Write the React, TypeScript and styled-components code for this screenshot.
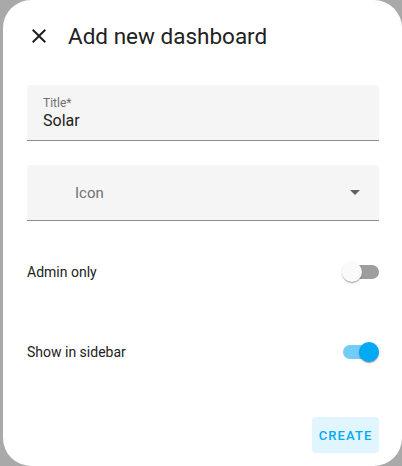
import React from 'react';
import styled, { createGlobalStyle } from 'styled-components';

const GlobalStyle = createGlobalStyle`
  html, body {
    margin: 0;
    padding: 0;
    background: #a9a9a9;
    font-family: Roboto, 'Liberation Sans', sans-serif;
  }
  * {
    box-sizing: border-box;
  }
`;

const Dialog = styled.div`
  margin-left: 3px;
  width: 399px;
  height: 466px;
  background: #fff;
  border-radius: 28px;
  padding: 0 23px 0 24px;
  display: flex;
  flex-direction: column;
`;

const Header = styled.div`
  display: flex;
  align-items: center;
  height: 72px;
  gap: 17px;
`;

const CloseButton = styled.button`
  width: 24px;
  height: 24px;
  padding: 0;
  border: none;
  background: none;
  color: #212121;
  display: flex;
  align-items: center;
  justify-content: center;
`;

const Title = styled.h2`
  margin: 0;
  font-size: 22.5px;
  font-weight: 400;
  color: #212121;
`;

const Field = styled.div<{ $top: number }>`
  margin-top: ${(p) => p.$top}px;
  height: 56px;
  background: #f5f5f5;
  border-radius: 4px 4px 0 0;
  border-bottom: 1px solid #8c8c8c;
  position: relative;
  display: flex;
  flex-direction: column;
  justify-content: center;
  padding: 0 16px;
`;

const SmallLabel = styled.span`
  font-size: 12px;
  color: #6f6f6f;
  line-height: 14px;
  margin-top: 2px;
`;

const Value = styled.span`
  font-size: 16px;
  color: #212121;
  line-height: 22px;
`;

const SelectField = styled(Field)`
  flex-direction: row;
  align-items: center;
  justify-content: space-between;
  padding: 0 19px 0 48px;
`;

const Placeholder = styled.span`
  font-size: 15px;
  color: #717171;
  margin-top: 1px;
`;

const Row = styled.div<{ $top: number }>`
  margin-top: ${(p) => p.$top}px;
  height: 48px;
  display: flex;
  align-items: center;
  justify-content: space-between;
`;

const RowLabel = styled.span`
  font-size: 14px;
  color: #212121;
`;

const Switch = styled.div<{ $on: boolean }>`
  position: relative;
  width: 36px;
  height: 14px;
  border-radius: 7px;
  background: ${(p) => (p.$on ? '#72ccf6' : '#9e9e9e')};
`;

const Thumb = styled.div<{ $on: boolean }>`
  position: absolute;
  top: -3px;
  left: ${(p) => (p.$on ? '16px' : '-1px')};
  width: 20px;
  height: 20px;
  border-radius: 50%;
  background: ${(p) => (p.$on ? '#03a9f4' : '#fafafa')};
  box-shadow: 0 2px 1px -1px rgba(0, 0, 0, 0.2), 0 1px 1px 0 rgba(0, 0, 0, 0.14),
    0 1px 3px 0 rgba(0, 0, 0, 0.12);
`;

const Footer = styled.div`
  margin-top: auto;
  margin-bottom: 13px;
  display: flex;
  justify-content: flex-end;
`;

const CreateButton = styled.button`
  width: 67px;
  height: 36px;
  border: none;
  border-radius: 4px;
  background: #e1f5fe;
  color: #03a9f4;
  font-family: Roboto, 'Liberation Sans', sans-serif;
  font-size: 13px;
  font-weight: 500;
  letter-spacing: 1.1px;
  padding: 0;
`;

const App = () => {
  return (
    <>
      <GlobalStyle />
      <Dialog>
        <Header>
          <CloseButton>
            <svg width="24" height="24" viewBox="0 0 24 24">
              <path
                fill="currentColor"
                d="M19,6.41L17.59,5L12,10.59L6.41,5L5,6.41L10.59,12L5,17.59L6.41,19L12,13.41L17.59,19L19,17.59L13.41,12L19,6.41Z"
              />
            </svg>
          </CloseButton>
          <Title>Add new dashboard</Title>
        </Header>
        <Field $top={13}>
          <SmallLabel>Title*</SmallLabel>
          <Value>Solar</Value>
        </Field>
        <SelectField $top={24}>
          <Placeholder>Icon</Placeholder>
          <svg width="10" height="5" viewBox="0 0 10 5">
            <path fill="#606060" d="M0,0L10,0L5,5Z" />
          </svg>
        </SelectField>
        <Row $top={27}>
          <RowLabel>Admin only</RowLabel>
          <Switch $on={false}>
            <Thumb $on={false} />
          </Switch>
        </Row>
        <Row $top={32}>
          <RowLabel>Show in sidebar</RowLabel>
          <Switch $on>
            <Thumb $on />
          </Switch>
        </Row>
        <Footer>
          <CreateButton>CREATE</CreateButton>
        </Footer>
      </Dialog>
    </>
  );
};

export default App;
